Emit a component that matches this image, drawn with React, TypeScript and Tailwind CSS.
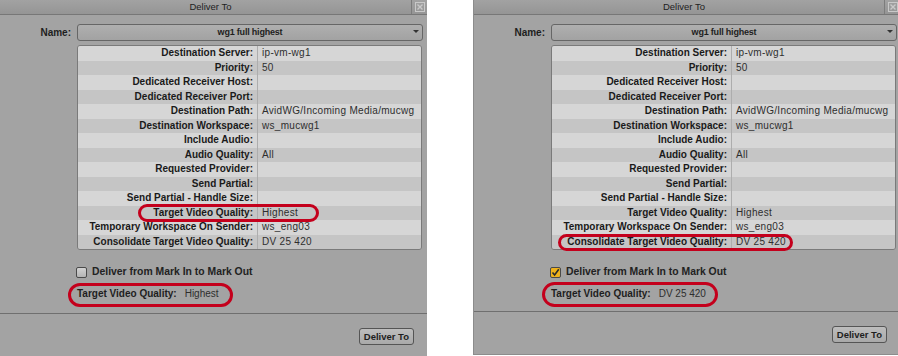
import React from "react";

const FONT = { fontFamily: '"Liberation Sans", Arial, sans-serif' };

const ROWS: [string, string][] = [
  ["Destination Server:", "ip-vm-wg1"],
  ["Priority:", "50"],
  ["Dedicated Receiver Host:", ""],
  ["Dedicated Receiver Port:", ""],
  ["Destination Path:", "AvidWG/Incoming Media/mucwg"],
  ["Destination Workspace:", "ws_mucwg1"],
  ["Include Audio:", ""],
  ["Audio Quality:", "All"],
  ["Requested Provider:", ""],
  ["Send Partial:", ""],
  ["Send Partial - Handle Size:", ""],
  ["Target Video Quality:", "Highest"],
  ["Temporary Workspace On Sender:", "ws_eng03"],
  ["Consolidate Target Video Quality:", "DV 25 420"],
];

type Ring = { left: number; top: number; width: number; height: number };

function CloseIcon() {
  return (
    <svg width="10" height="10" viewBox="0 0 10 10" fill="none">
      <rect x="0.5" y="0.5" width="9" height="9" stroke="#c9c9c9" />
      <path d="M2.5 2.5 L7.5 7.5 M7.5 2.5 L2.5 7.5" stroke="#c9c9c9" strokeWidth="1.4" />
    </svg>
  );
}

function Checkbox({ checked }: { checked: boolean }) {
  if (checked) {
    return (
      <div className="flex h-[11px] w-[11px] items-center justify-center rounded-[2px] border border-[#4a4a4a] bg-[#efb21c]">
        <svg width="9" height="9" viewBox="0 0 9 9" fill="none">
          <path d="M1.5 4.5 L3.6 7 L7.8 1.2" stroke="#2a2a2a" strokeWidth="1.6" />
        </svg>
      </div>
    );
  }
  return <div className="h-[11px] w-[11px] rounded-[2px] border border-[#4a4a4a] bg-gradient-to-b from-[#d2d2d2] to-[#b4b4b4]" />;
}

function Dialog({
  checked,
  value,
  rings,
  edge,
}: {
  checked: boolean;
  value: string;
  rings: Ring[];
  edge?: boolean;
}) {
  return (
    <div
      className={
        "relative flex w-[427px] shrink-0 flex-col bg-[#a3a3a3] " +
        (edge ? "h-[355px] border-b border-l border-[#8c8c8c]" : "h-[356px]")
      }
      style={FONT}
    >
      {/* title bar */}
      <div className="flex h-[15px] shrink-0 border-b border-[#777] bg-gradient-to-b from-[#a2a2a2] to-[#959595]">
        <div className="flex flex-1 items-center justify-center pl-[10px] text-[9.5px] leading-none text-[#1e1e1e]">
          Deliver To
        </div>
        <div className="flex w-[16px] items-center justify-center border-l border-[#7c7c7c]">
          <CloseIcon />
        </div>
      </div>

      {/* name */}
      <div className="mt-[9px] flex h-[17px] items-center">
        <div className="w-[77px] pr-[6px] text-right text-[10px] font-bold text-[#1e1e1e]">Name:</div>
        <div className="relative flex h-[17px] w-[346px] items-center justify-center rounded-[3px] border border-[#666] bg-gradient-to-b from-[#afafaf] to-[#a2a2a2] text-[9px] font-bold tracking-[-0.2px] text-[#1e1e1e]">
          wg1 full highest
          <div className="absolute right-[3px] top-[5px] h-0 w-0 border-x-[3px] border-t-[3px] border-x-transparent border-t-[#333]" />
        </div>
      </div>

      {/* properties table */}
      <div className="ml-[77px] mt-[4px] w-[345px] overflow-hidden rounded-[3px] border border-[#7a7a7a]">
        {ROWS.map(([label, val], i) => (
          <div
            key={label}
            className={
              "grid h-[14.5px] grid-cols-[179px_1fr] items-center " +
              (i % 2 === 0 ? "bg-[#d6d6d6]" : "bg-[#c5c5c5]")
            }
          >
            <div className="pr-[4px] text-right text-[10px] font-bold leading-none text-[#1a1a1a]">{label}</div>
            <div className="flex h-full items-center border-l border-[#adadad] pl-[4px] text-[10px] leading-none tracking-[0.3px] text-[#2e2e2e]">
              {val}
            </div>
          </div>
        ))}
      </div>

      {/* mark in/out */}
      <div className="ml-[76px] mt-[17px] flex items-center gap-[5px]">
        <Checkbox checked={checked} />
        <span className="text-[10.4px] font-bold leading-none text-[#222]">Deliver from Mark In to Mark Out</span>
      </div>

      <div className="ml-[77px] mt-[11px] flex items-center gap-[8px] text-[10px] leading-none">
        <span className="font-bold text-[#1e1e1e]">Target Video Quality:</span>
        <span className="text-[#2e2e2e]">{value}</span>
      </div>

      {/* footer */}
      <div className="mt-auto flex h-[43px] shrink-0 justify-end border-t border-[#6f6f6f] pr-[13px] pt-[14px]">
        <button className="h-[17px] rounded-[3px] border border-[#555] bg-gradient-to-b from-[#bdbdbd] to-[#a9a9a9] px-[4px] text-[9.5px] font-bold leading-none text-[#1e1e1e]">
          Deliver To
        </button>
      </div>

      {rings.map((r, i) => (
        <div
          key={i}
          className="pointer-events-none absolute rounded-full border-[3px] border-[#c4001c]"
          style={{ left: r.left, top: r.top, width: r.width, height: r.height }}
        />
      ))}
    </div>
  );
}

export default function App() {
  return (
    <div className="flex h-[356px] w-[898px] items-start gap-[46px] overflow-hidden bg-white">
      <Dialog
        checked={false}
        value="Highest"
        rings={[
          { left: 138, top: 204, width: 181, height: 18 },
          { left: 68, top: 283, width: 165, height: 24 },
        ]}
      />
      <Dialog
        checked={true}
        value="DV 25 420"
        edge
        rings={[
          { left: 84, top: 234, width: 235, height: 17 },
          { left: 68, top: 282, width: 176, height: 25 },
        ]}
      />
    </div>
  );
}
